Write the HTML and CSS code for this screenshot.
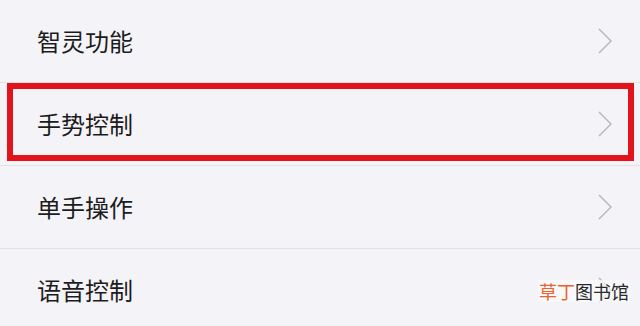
FILE: index.html
```html
<!DOCTYPE html>
<html lang="zh-CN">
<head>
  <meta charset="UTF-8">
  <meta name="viewport" content="width=device-width, initial-scale=1.0">
  <title>设置</title>
  <link rel="stylesheet" href="styles.css">
</head>
<body>

  <ul class="menu">
    <li class="menu-item">
      <span class="label">智灵功能</span>
      <svg class="arrow" viewBox="0 0 14 26"><path d="M1 1 L13 13 L1 25"/></svg>
    </li>
    <li class="menu-item marked">
      <span class="label">手势控制</span>
      <svg class="arrow" viewBox="0 0 14 26"><path d="M1 1 L13 13 L1 25"/></svg>
    </li>
    <li class="menu-item">
      <span class="label">单手操作</span>
      <svg class="arrow" viewBox="0 0 14 26"><path d="M1 1 L13 13 L1 25"/></svg>
    </li>
    <li class="menu-item">
      <span class="label">语音控制</span>
      <svg class="arrow" viewBox="0 0 14 26"><path d="M1 1 L13 13 L1 25"/></svg>
    </li>
  </ul>

  <div class="watermark"><span class="orange">草丁</span>图书馆</div>

</body>
</html>
```

FILE: styles.css
```css
body {
  margin: 0;
  background: #f4f3f8;
  font-family: 'Noto Sans CJK SC', sans-serif;
  color: #1c1c1c;
  height: 326px;
  overflow: hidden;
  position: relative;
}

.menu {
  list-style: none;
  margin: 0;
  padding: 0;
}

.menu-item {
  height: 82px;
  border-bottom: 1px solid #e2e1e6;
  display: flex;
  align-items: center;
  justify-content: space-between;
  padding: 0 28px 0 37px;
  position: relative;
}

.label {
  font-size: 24px;
  line-height: 1;
}

.arrow {
  width: 14px;
  height: 26px;
  fill: none;
  stroke: #b4b4ba;
  stroke-width: 1.4;
}

.marked::after {
  content: "";
  position: absolute;
  top: 0;
  left: 7px;
  right: 6px;
  bottom: 4px;
  border: 6px solid #e3131b;
}

.watermark {
  position: absolute;
  right: 10px;
  bottom: 24px;
  font-size: 18px;
  line-height: 22px;
  color: #2a2a2a;
  background: rgba(250, 250, 252, 0.75);
  padding: 0 1px;
}

.orange {
  color: #e8642c;
}
```
